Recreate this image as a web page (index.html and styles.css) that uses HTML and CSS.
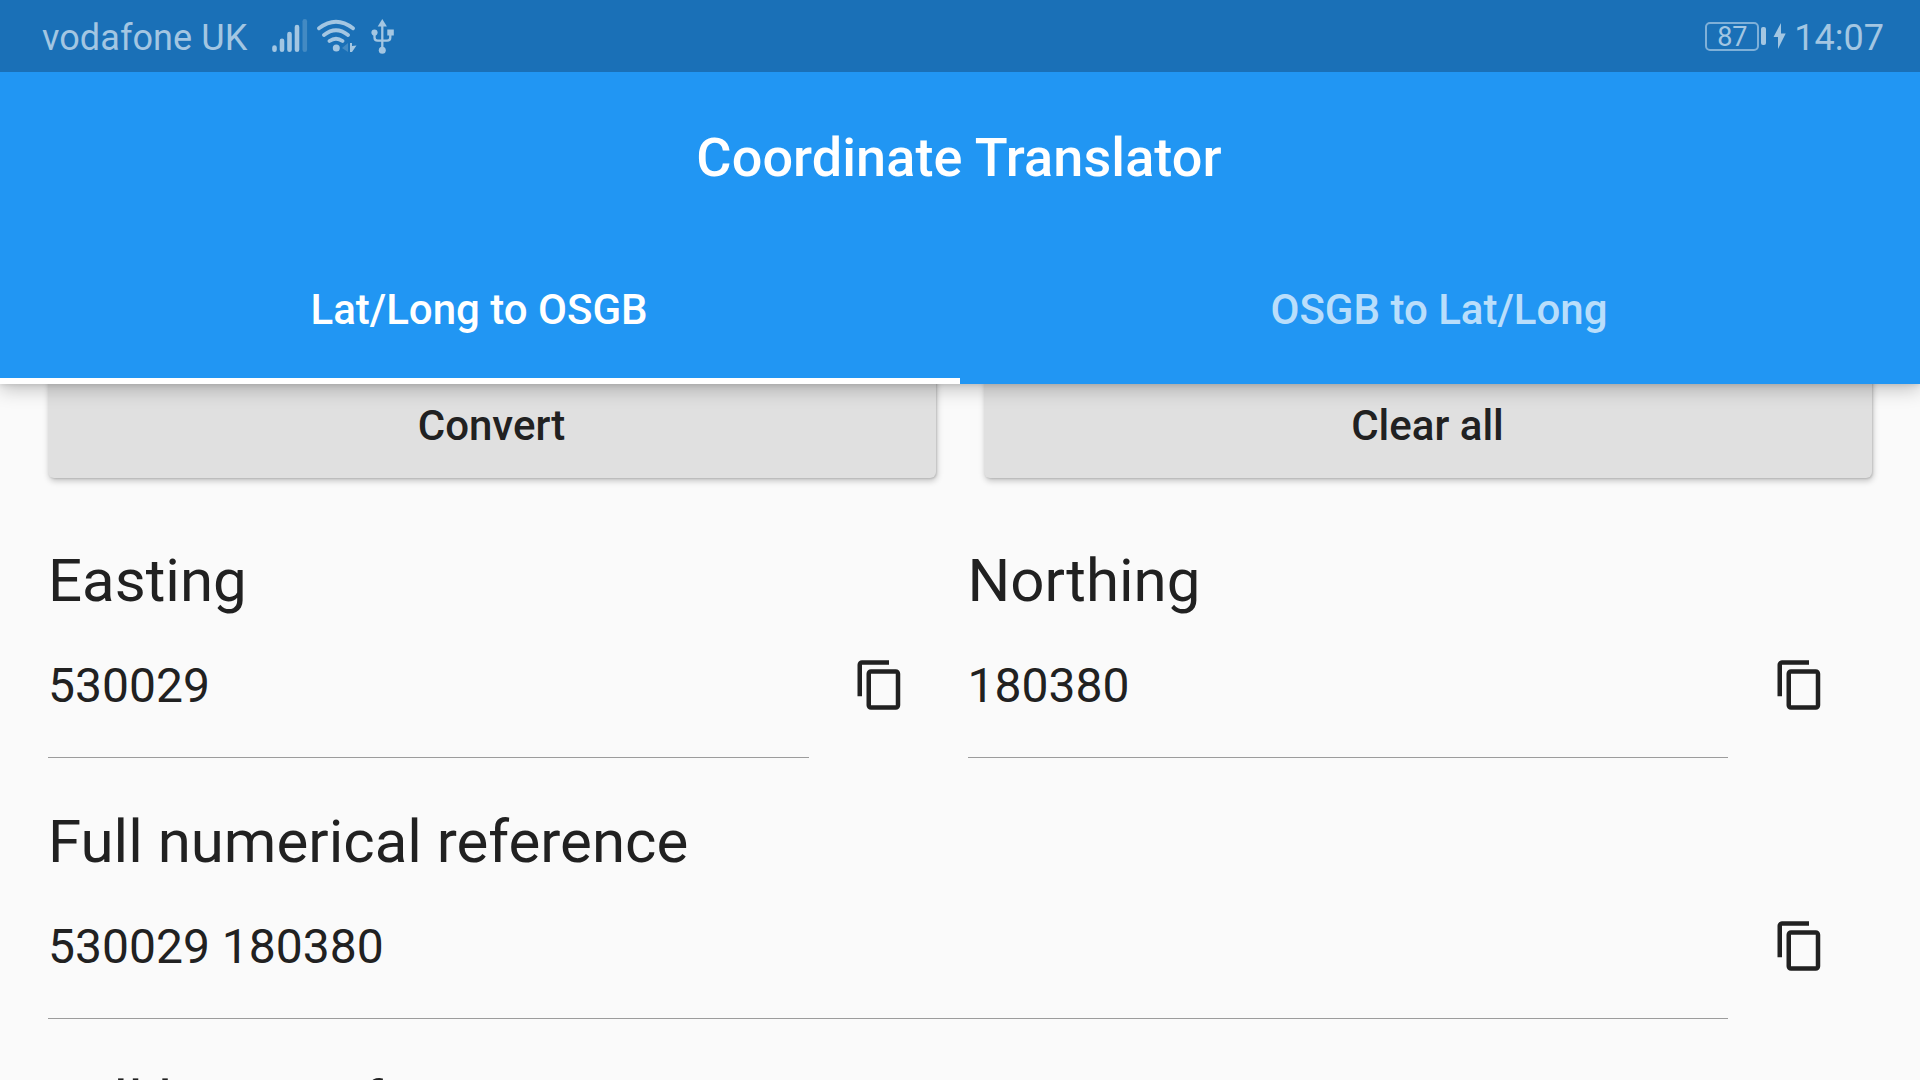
FILE: index.html
```html
<!DOCTYPE html>
<html lang="en">
<head>
<meta charset="utf-8">
<title>Coordinate Translator</title>
<link rel="stylesheet" href="styles.css">
</head>
<body>
<svg class="defs" aria-hidden="true">
  <symbol id="copy" viewBox="0 0 24 24"><path d="M16 1H4c-1.1 0-2 .9-2 2v14h2V3h12V1zm3 4H8c-1.1 0-2 .9-2 2v14c0 1.1.9 2 2 2h11c1.1 0 2-.9 2-2V7c0-1.1-.9-2-2-2zm0 16H8V7h11v14z"/></symbol>
</svg>
<div class="screen">
  <header class="header">
    <div class="status">
      <div class="status-left">
        <span class="carrier">vodafone UK</span>
        <svg class="status-icons" width="124" height="36" viewBox="271 18 124 36">
          <g fill="none" stroke="currentColor" stroke-linecap="round" stroke-width="4.6">
            <path d="M274.5 47.5v2.2M282 40.8v8.9M289.5 34v15.7M297 27v22.7"/>
            <path d="M304.8 21.3v28.4" opacity=".3"/>
            <path d="M319 28.3q17-13 34 0M324 35q12-9.500 24 0M329.500 41q6.500-4.500 13 0" stroke-width="3.800"/>
          </g>
          <g fill="currentColor">
            <circle cx="336.300" cy="48" r="3.500"/>
            <path d="M348 43v9l-6-4z" opacity=".3"/>
            <path d="M350 43l2 0v3l4.500-.5-4.500 6.500h-2z"/>
            <path d="M382.300 19l4.600 7.500h-9.200z"/>
            <circle cx="382.300" cy="50.200" r="3.500"/>
            <circle cx="374.500" cy="32.500" r="3.100"/>
            <rect x="387.300" y="29.500" width="6.500" height="6"/>
          </g>
          <path d="M382.300 25v24M374.500 33v4.500q0 3.200 3.200 3.200h9.400q3.200 0 3.200-3.200V33" fill="none" stroke="currentColor" stroke-width="2.300"/>
        </svg>
      </div>
      <div class="status-right">
        <span class="battery">87</span>
        <span class="battery-tip"></span>
        <svg class="bolt" width="13" height="28" viewBox="0 0 13 28"><path d="M8 1v10.500h4.700L5 27V15H.5z" fill="currentColor"/></svg>
        <span class="clock">14:07</span>
      </div>
    </div>
    <h1 class="title">Coordinate Translator</h1>
    <nav class="tabs">
      <a class="tab tab-active">Lat/Long to OSGB</a>
      <a class="tab">OSGB to Lat/Long</a>
    </nav>
  </header>
  <main class="content">
    <div class="buttons">
      <button class="button">Convert</button>
      <button class="button">Clear all</button>
    </div>
    <div class="fields">
      <section class="field">
        <h2 class="label">Easting</h2>
        <div class="row"><div class="value">530029</div><svg class="copy"><use href="#copy"/></svg></div>
      </section>
      <section class="field">
        <h2 class="label">Northing</h2>
        <div class="row"><div class="value">180380</div><svg class="copy"><use href="#copy"/></svg></div>
      </section>
      <section class="field field-wide">
        <h2 class="label">Full numerical reference</h2>
        <div class="row"><div class="value">530029 180380</div><svg class="copy"><use href="#copy"/></svg></div>
      </section>
      <section class="field field-wide">
        <h2 class="label">Full letter reference</h2>
      </section>
    </div>
  </main>
</div>
</body>
</html>
```
FILE: styles.css
```css
* { box-sizing: border-box; }
body {
  margin: 0;
  font-family: Roboto, "Liberation Sans", sans-serif;
  background: #fafafa;
  color: #212121;
}
.defs { display: none; }
.screen {
  width: 1920px;
  height: 1080px;
  overflow: hidden;
  display: flex;
  flex-direction: column;
}
.header {
  position: relative;
  z-index: 1;
  flex: none;
  height: 384px;
  background: #2196f3;
  color: #fff;
  box-shadow: 0 5px 18px rgba(0, 0, 0, .24), 0 1px 5px rgba(0, 0, 0, .1);
}
.status {
  height: 72px;
  padding: 0 36px 0 42px;
  display: flex;
  justify-content: space-between;
  background: #1a70b7;
  color: #a3c6e2;
}
.status-left, .status-right { display: flex; align-items: center; }
.carrier {
  width: 229px;
  font-size: 36px;
  line-height: 72px;
  letter-spacing: .08px;
  padding-top: 3px;
  white-space: nowrap;
}
.battery {
  width: 54px;
  height: 29px;
  border: 2px solid #7fb0d8;
  border-radius: 5px;
  font-size: 27px;
  line-height: 26px;
  text-align: center;
}
.battery-tip { width: 5px; height: 18px; margin-left: 2px; border-radius: 2px; background: currentColor; }
.bolt { margin-left: 7px; }
.clock { margin-left: 8px; padding-top: 3px; font-size: 36px; line-height: 72px; }
.title {
  margin: 0;
  height: 168px;
  padding-right: 2px;
  font-size: 54px;
  font-weight: 500;
  line-height: 172px;
  letter-spacing: .08px;
  text-align: center;
}
.tabs { display: flex; height: 144px; }
.tab {
  flex: 1;
  height: 144px;
  padding-right: 2px;
  font-size: 42px;
  font-weight: 500;
  line-height: 139px;
  text-align: center;
  color: rgba(255, 255, 255, .7);
}
.tab-active { color: #fff; border-bottom: 6px solid #fff; }
.content { padding: 0 48px; }
.buttons { display: flex; gap: 48px; margin-top: -14px; }
.button {
  flex: 1;
  height: 108px;
  border: 0;
  border-radius: 6px;
  background: #e0e0e0;
  color: #212121;
  font: 500 42px/108px Roboto, "Liberation Sans", sans-serif;
  padding: 0 1px 0 0;
  box-shadow: 1px 3px 6px rgba(0, 0, 0, .22), 1px 1px 2px rgba(0, 0, 0, .12);
}
.fields { display: grid; grid-template-columns: 1fr 1fr; column-gap: 15px; margin-top: 67px; }
.field { height: 261px; }
.field-wide { grid-column: 1 / -1; }
.label { margin: 0; height: 70px; font-size: 60px; font-weight: 400; line-height: 72px; white-space: nowrap; }
.row { display: flex; align-items: flex-start; height: 144px; }
.value {
  flex: 1;
  height: 143px;
  border-bottom: 1px solid #9c9c9c;
  font-size: 48px;
  line-height: 142px;
}
.copy { width: 54px; height: 54px; margin: 43px 45.5px 0 44.5px; fill: #212121; }
.button { line-height: 109px; padding-top: 1px; }
```
